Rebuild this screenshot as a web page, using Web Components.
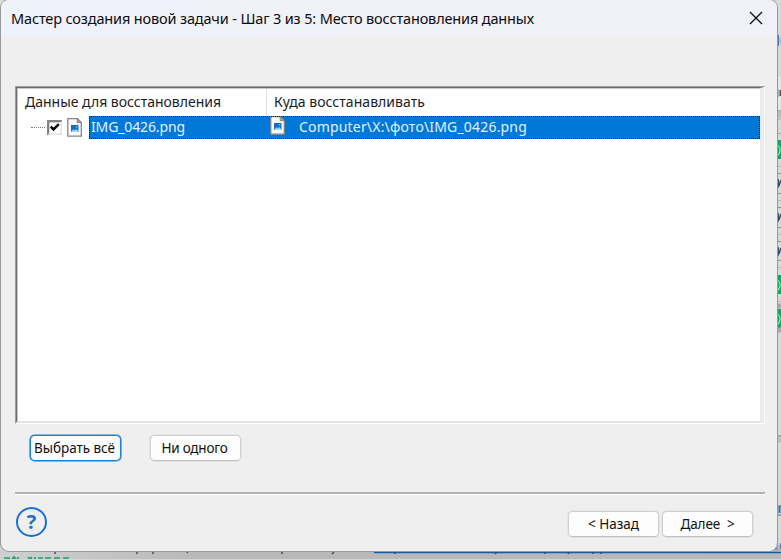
<!DOCTYPE html>
<html lang="ru">
<head>
<meta charset="utf-8">
<title>Мастер создания новой задачи</title>
<style>
html,body{margin:0;width:781px;height:559px;overflow:hidden;background:#c4c4c4;font-family:"Noto Sans","Open Sans",sans-serif;color:#111}
</style>
</head>
<body>
<restore-wizard></restore-wizard>
<script>
const define = (name, html, init) => customElements.define(name, class extends HTMLElement {
  constructor() {
    super();
    this.attachShadow({mode: 'open'}).innerHTML = html;
  }
  connectedCallback() { if (init) init.call(this); }
});

/* One-line label spaced so that it fills the width given in its w attribute. */
define('fit-label', `<style>:host{display:block;white-space:pre;flex:none}span{display:inline-block}</style><span></span>`, function () {
  const span = this.shadowRoot.querySelector('span');
  const text = this.getAttribute('text');
  span.textContent = text;
  const w = +this.getAttribute('w');
  span.style.letterSpacing = (w - span.getBoundingClientRect().width) / text.length + 'px';
  this.style.width = w + 'px';
});

define('image-file-icon', `<style>:host{display:block;width:15px;height:19px;flex:none}svg{display:block}</style>
<svg width="15" height="19" viewBox="0 0 15 19"><path d="M.8.7h9.7l3.8 3.8v13.7H.8z" fill="#fbfbfb" stroke="#858585" stroke-width="1.3"/><path d="M10.2.7v4h4z" fill="#aaa" stroke="#858585"/><rect x="4" y="7" width="7.5" height="7" fill="#156fc4"/><path d="M4 14l2.4-2.8 1.4 1.2 1.4-1.4 2.300 2.500v.5z" fill="#a5d5f7"/><circle cx="9.700" cy="8.800" r=".7" fill="#a5d5f7"/></svg>`);

define('check-box', `<style>:host{display:block;width:15px;height:15px;flex:none}svg{display:block}</style>
<svg width="15" height="15"><path d="M0 0h15v15H0z" fill="#e3e3e3"/><path d="M.7 15V.7H15" fill="none" stroke="#858585" stroke-width="1.4"/><path d="M1.9 13.3V1.9h11.4" fill="none" stroke="#555"/><path d="M2.4 2.4h11v11h-11z" fill="#fff"/><path d="M3.7 6.6l2.8 2.9 5.3-5.3" fill="none" stroke="#080808" stroke-width="2.6"/></svg>`);

define('push-button', `<style>
:host{display:flex;box-sizing:border-box;width:91px;height:26px;border:1px solid #cfcfcf;border-bottom-color:#bfbfbf;border-radius:4.5px;background:#fdfdfd;align-items:center;justify-content:center;font-size:13.5px;line-height:20px;box-shadow:0 0 0 .5px #dcdcdc}
:host([primary]){border:1px solid #1583d7;box-shadow:0 0 0 .6px #1583d7}
</style><slot></slot>`);

define('title-bar', `<style>
:host{display:flex;height:37px;box-sizing:border-box;padding:0 14px 2px 10px;align-items:center;justify-content:space-between;background:linear-gradient(90deg,#eef2fb,#f1f1f8 50%,#f1f2f9);font-size:14.5px;line-height:20px;color:#0c0c0c}
svg{display:block;flex:none}
</style><slot></slot><svg width="14" height="14"><path d="M1 1l12 12M13 1L1 13" stroke="#111" stroke-width="1.35"/></svg>`);

define('restore-list', `<style>
:host{display:block;box-sizing:border-box;width:750px;height:338px;margin:49px 0 0 14px;border:solid;border-width:1px;border-color:#a0a0a0 #fff #fff #a0a0a0;font-size:14px;line-height:20px}
.in{box-sizing:border-box;height:336px;border:solid;border-width:1px 4px 2px 1px;border-color:#6c6c6c #ececec #e3e3e3 #6c6c6c;background:#fff;box-shadow:inset 1px 1px #c9c9c9}
.head,.row{display:grid;grid-template-columns:249px 1fr}
.head{height:28px;color:#1c1c26}
.head>div{padding:4px 0 0 8px;box-sizing:border-box}
.head>div+div{border-left:1px solid #e4e4e4;margin-top:1px;padding:3px 0 0 7px}
.row{height:23px;grid-template-columns:72px 1fr}
.tree{display:flex;align-items:center;padding-left:14px}
.tree i{width:14px;border-top:1px dotted #777;margin-right:2px}
.tree check-box{margin-right:5px}
.sel{display:grid;grid-template-columns:181px 15px 1fr;background:#0078d7;outline:1px dotted #10202e;outline-offset:-1px;color:#e5f2ff}
.sel>fit-label{padding-top:1px}
.sel>fit-label:first-child{margin:0 0 0 2px}
.sel>fit-label:last-child{margin:0 0 0 14px}
</style><div class="in"><div class="head"><div><fit-label w="196" text="Данные для восстановления"></fit-label></div><div><fit-label w="151" text="Куда восстанавливать"></fit-label></div></div>
<div class="row"><div class="tree"><i></i><check-box></check-box><image-file-icon></image-file-icon></div><div class="sel"><fit-label w="94" text="IMG_0426.png"></fit-label><image-file-icon></image-file-icon><fit-label w="228" text="Computer\\X:\\фото\\IMG_0426.png"></fit-label></div></div></div>`);

define('help-button', `<style>:host{display:flex;box-sizing:border-box;width:31px;height:30px;border:2px solid #176fd1;border-radius:50%;align-items:center;justify-content:center;color:#2674b8;font:700 20px/24px "Open Sans","Noto Sans",sans-serif;flex:none;padding-bottom:1px}</style>?`);

/* Slivers of the pages that show around the edge of the dialog. */
define('desktop-backdrop', `<style>:host{display:block;width:781px;height:559px}svg{display:block}</style>
<svg width="781" height="559">
<defs><linearGradient id="b"><stop stop-color="#d0d0d0"/><stop offset=".25" stop-color="#b9b9b9"/><stop offset="1" stop-color="#b8b8b8"/></linearGradient>
<linearGradient id="l" x2="0" y2="1"><stop stop-color="#dcdcdc"/><stop offset=".4" stop-color="#aaa"/><stop offset="1" stop-color="#b1b1b1"/></linearGradient></defs>
<rect width="12" height="559" fill="url(#l)"/><rect x="765" width="16" height="559" fill="#d8d8d8"/><rect y="545" width="781" height="14" fill="url(#b)"/>
<g fill="#718cb1"><rect y="279" width="1" height="9"/><rect y="449" width="1" height="8"/></g><rect y="508" width="1" height="3" fill="#c37b3a"/><rect y="525" width="1" height="6" fill="#505b8e"/><rect y="303" width="1" height="30" fill="#9b9b8e"/><rect y="487" width="1" height="6" fill="#666"/>
<rect x="777" y="35" width="2" height="11" fill="#477ab5"/><path d="M780 37v7" stroke="#96add0"/>
<rect x="777" y="77" width="4" height="33" fill="#e6e6e6"/><rect x="777" y="89" width="1.5" height="8" fill="#4387b7"/><rect x="779.5" y="90" width="1.5" height="6" fill="#78482d"/>
<path d="M777 110.5h4M777 119h4M777 133.5h4" stroke="#aaa"/><path d="M777 114h4" stroke="#bcbcbc" stroke-width="7"/>
<g fill="#13a564"><rect x="777" y="140" width="4" height="19"/><rect x="777" y="275" width="4" height="19"/><rect x="777" y="309" width="4" height="19"/></g>
<g fill="none" stroke="#9ce491" stroke-width="1.2"><path d="M777 145q3 1 3 5t-3 6M777 280q3 1 3 5t-3 6M777 314q3 1 3 5t-3 6"/></g>
<g stroke="#909090"><path d="M777 173.500h4M777 193.500h4M777 207.500h4M777 227.500h4M777 241.500h4M777 260.500h4"/></g>
<g stroke="#bbb"><path d="M777 166.500h4M777 200.500h4M777 234.500h4M777 267.500h4M777 301.500h4"/></g>
<g fill="none" stroke="#2e4a68" stroke-width="1.2"><path d="M778 179q1.500 2 0 9M781 180l-2 6M778 213q1.500 2 0 9M781 214l-2 6M778 247q1.500 2 0 9M781 248l-2 6"/></g>
<g fill="#c78e4a"><rect x="777" y="181" width="1" height="7"/><rect x="777" y="215" width="1" height="7"/><rect x="777" y="249" width="1" height="7"/></g>
<path d="M777 306h4M777 330h4" stroke="#aaa" stroke-width="5"/><path d="M777 436h4" stroke="#777"/><path d="M777 440h4" stroke="#bbb" stroke-width="5"/>
<path d="M777 515h4M777 506h2v7M780 513v-7h1" fill="none" stroke="#297bb8" stroke-width="1.1"/>
<path d="M775 543h3l-3 6h3M781 543q-2 3 0 6" fill="none" stroke="#5376ae"/>
<path d="M374 552.500h407" stroke="#175ca2" stroke-width="1.4"/>
<path d="M395 551v3M497 552l-2 2M545 551v3M569 552l-1 2M593 551v3M601 551v3" stroke="#174e8b" stroke-width="1.5"/>
<path d="M55 550v4M137 551v3M153 551v3M188 551l-1 2M282 551v3M334 552l-2 2" stroke="#474a5d" stroke-width="1.5"/>
<path d="M4 558h6M12 559l2-2 2 2M18 557v2M28 557l2 2 2-2M35 557v2M38 558h5M45 558h6M54 558h6M63 558h6" fill="none" stroke="#229b6b" stroke-width="1.7"/>
</svg>`);

define('wizard-footer', `<style>
:host{display:flex;box-sizing:border-box;width:750px;margin:31px 0 0 14px;padding:13px 12px 0 1px;border-top:2px solid #b2b2b2;box-shadow:inset 0 1px #fff;justify-content:space-between;align-items:flex-start}
nav{display:flex;gap:3px;padding-top:4px}
push-button{transform:none}
</style><help-button></help-button><nav><push-button><fit-label w="51" text="&lt; Назад"></fit-label></push-button><push-button><fit-label w="54" text="Далее  &gt;"></fit-label></push-button></nav>`);

define('restore-wizard', `<style>
:host{display:grid;width:781px;height:559px}
desktop-backdrop,.window{grid-area:1/1}
.window{box-sizing:border-box;width:776px;height:551px;margin-left:1px;background:#efefef;border-radius:8px;overflow:hidden;box-shadow:0 0 0 1px #999}
.choices{display:flex;gap:29px;margin:11px 0 0 29px}
</style><desktop-backdrop></desktop-backdrop><main class="window">
<title-bar><fit-label w="523" text="Мастер создания новой задачи - Шаг 3 из 5: Место восстановления данных"></fit-label></title-bar>
<restore-list></restore-list>
<div class="choices"><push-button primary><fit-label w="81" style="margin-right:2px" text="Выбрать всё"></fit-label></push-button><push-button><fit-label w="66" style="margin-right:2px" text="Ни одного"></fit-label></push-button></div>
<wizard-footer></wizard-footer></main>`);
</script>
</body>
</html>
